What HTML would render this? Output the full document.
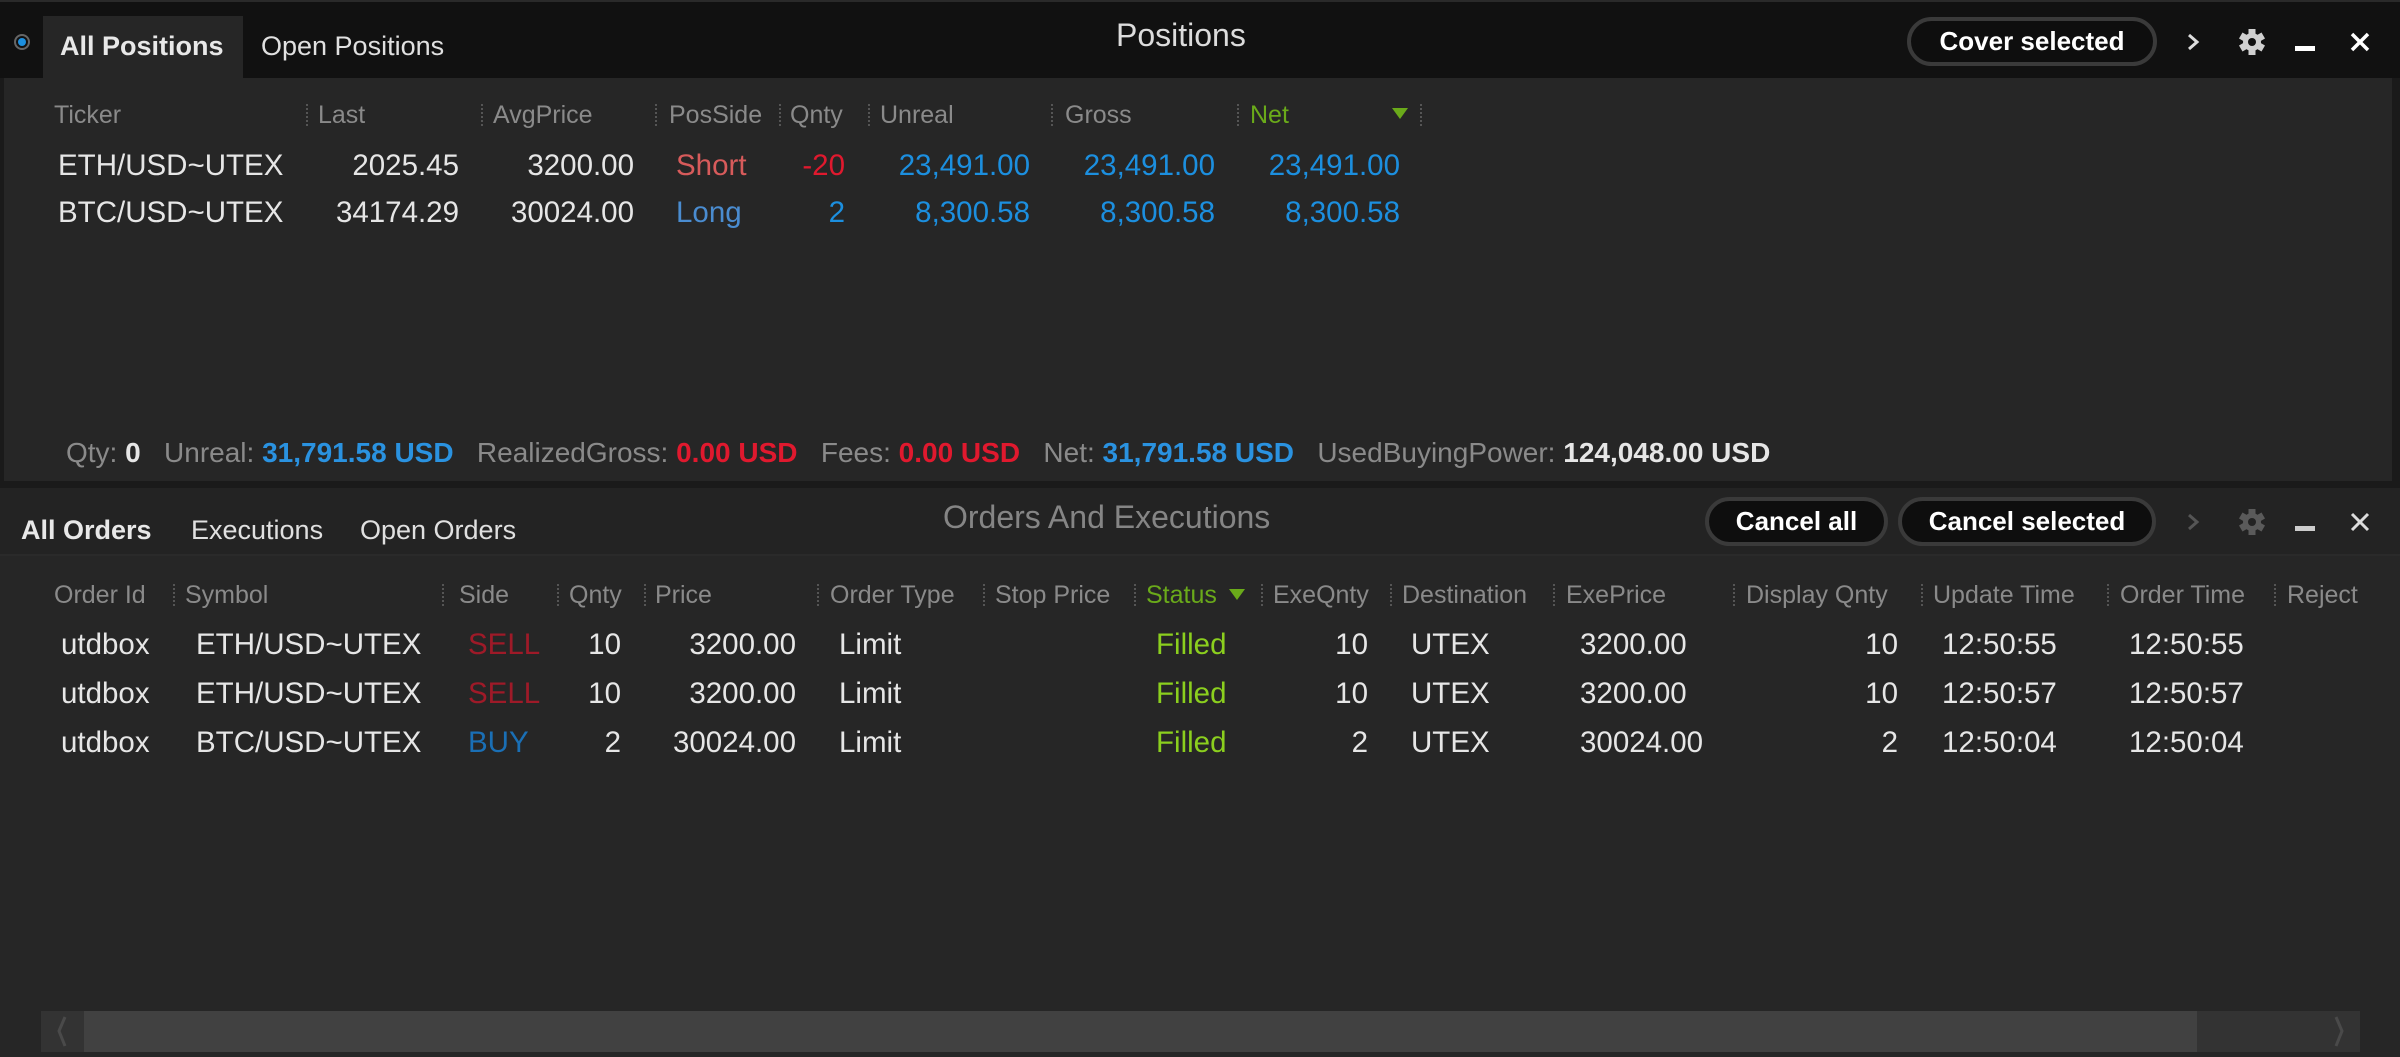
<!DOCTYPE html>
<html><head><meta charset="utf-8"><style>
*{margin:0;padding:0;box-sizing:border-box}
body{width:2400px;height:1057px;background:#1a1a1a;font-family:"Liberation Sans",sans-serif;position:relative;overflow:hidden;color:#e4e4e4}
.a{position:absolute;white-space:nowrap}
.r{text-align:right}
.h{font-size:25px;color:#8a8a8a}
.sep{position:absolute;width:0;height:22px;border-left:2px dotted #555}
.d{font-size:29.5px;color:#e6e6e6}
.btn{position:absolute;background:#0e0e0e;border:4px solid #3a3a3a;border-radius:26px;color:#fff;font-size:26px;font-weight:bold;text-align:center}
</style></head><body>
<div class="a" style="left:0;top:0;width:2400px;height:78px;background:#111;border-top:2px solid #2a2a2a"></div>
<div class="a" style="left:14px;top:34px;width:16px;height:16px;border-radius:50%;border:2px solid #666;background:#111"></div>
<div class="a" style="left:18px;top:38px;width:8px;height:8px;border-radius:50%;background:#1c8fdf"></div>
<div class="a" style="left:43px;top:16px;width:200px;height:62px;background:#262626"></div>
<div class="a" style="left:60px;top:31px;font-size:27px;font-weight:bold;color:#e8e8e8">All Positions</div>
<div class="a" style="left:261px;top:31px;font-size:27px;color:#e0e0e0">Open Positions</div>
<div class="a" style="left:1116px;top:17px;font-size:32px;color:#dcdcdc">Positions</div>
<div class="btn" style="left:1907px;top:17px;width:250px;height:49px;line-height:41px">Cover selected</div>
<svg class="a" style="left:2180px;top:28px" width="280" height="30" viewBox="0 0 280 30">
<path d="M9 7 L17 14 L9 21" stroke="#ddd" stroke-width="3" fill="none"/>
<g transform="translate(72,14)" fill="#d0d0d0"><circle r="9"/><rect x="-3.5" y="-13" width="7" height="26"/><rect x="-3.5" y="-13" width="7" height="26" transform="rotate(60)"/><rect x="-3.5" y="-13" width="7" height="26" transform="rotate(120)"/><circle r="4" fill="#111"/></g>
<rect x="115" y="18" width="20" height="5" fill="#fff"/>
<path d="M172 6 L188 22 M188 6 L172 22" stroke="#fff" stroke-width="3.5"/>
</svg>
<div class="a" style="left:4px;top:78px;width:2388px;height:403px;background:#262626"></div>
<div class="a h" style="left:54px;top:101px">Ticker</div>
<div class="sep" style="left:306px;top:104px"></div><div class="a h" style="left:318px;top:101px">Last</div>
<div class="sep" style="left:481px;top:104px"></div><div class="a h" style="left:493px;top:101px">AvgPrice</div>
<div class="sep" style="left:655px;top:104px"></div><div class="a h" style="left:669px;top:101px">PosSide</div>
<div class="sep" style="left:779px;top:104px"></div><div class="a h" style="left:790px;top:101px">Qnty</div>
<div class="sep" style="left:868px;top:104px"></div><div class="a h" style="left:880px;top:101px">Unreal</div>
<div class="sep" style="left:1051px;top:104px"></div><div class="a h" style="left:1065px;top:101px">Gross</div>
<div class="sep" style="left:1237px;top:104px"></div><div class="a h" style="left:1250px;top:101px;color:#6aaa1a">Net</div>
<div class="a" style="left:1392px;top:108px;width:0;height:0;border-left:8px solid transparent;border-right:8px solid transparent;border-top:11px solid #6aaa1a"></div>
<div class="sep" style="left:1420px;top:104px"></div>
<div class="a d" style="left:58px;top:149px">ETH/USD~UTEX</div>
<div class="a d r" style="right:1941px;top:149px">2025.45</div>
<div class="a d r" style="right:1766px;top:149px">3200.00</div>
<div class="a d" style="left:676px;top:149px;color:#d75b5b">Short</div>
<div class="a d r" style="right:1555px;top:149px;color:#e0192e">-20</div>
<div class="a d r" style="right:1370px;top:149px;color:#1c8fdf">23,491.00</div>
<div class="a d r" style="right:1185px;top:149px;color:#1c8fdf">23,491.00</div>
<div class="a d r" style="right:1000px;top:149px;color:#1c8fdf">23,491.00</div>
<div class="a d" style="left:58px;top:196px">BTC/USD~UTEX</div>
<div class="a d r" style="right:1941px;top:196px">34174.29</div>
<div class="a d r" style="right:1766px;top:196px">30024.00</div>
<div class="a d" style="left:676px;top:196px;color:#4a8cd0">Long</div>
<div class="a d r" style="right:1555px;top:196px;color:#1c8fdf">2</div>
<div class="a d r" style="right:1370px;top:196px;color:#1c8fdf">8,300.58</div>
<div class="a d r" style="right:1185px;top:196px;color:#1c8fdf">8,300.58</div>
<div class="a d r" style="right:1000px;top:196px;color:#1c8fdf">8,300.58</div>
<div class="a" style="left:66px;top:437px;font-size:28px;color:#8a8a8a">Qty: <b style="color:#e6e6e6">0</b>&nbsp;&nbsp; Unreal: <b style="color:#2a92e0">31,791.58 USD</b>&nbsp;&nbsp; RealizedGross: <b style="color:#e0192e">0.00 USD</b>&nbsp;&nbsp; Fees: <b style="color:#e0192e">0.00 USD</b>&nbsp;&nbsp; Net: <b style="color:#2a92e0">31,791.58 USD</b>&nbsp;&nbsp; UsedBuyingPower: <b style="color:#e6e6e6">124,048.00 USD</b></div>
<div class="a" style="left:0;top:488px;width:2400px;height:569px;background:#262626"></div>
<div class="a" style="left:0;top:488px;width:2400px;height:68px;background:#232323;border-bottom:2px solid #2a2a2a"></div>
<div class="a" style="left:21px;top:515px;font-size:27px;font-weight:bold;color:#e8e8e8">All Orders</div>
<div class="a" style="left:191px;top:515px;font-size:27px;color:#e0e0e0">Executions</div>
<div class="a" style="left:360px;top:515px;font-size:27px;color:#e0e0e0">Open Orders</div>
<div class="a" style="left:943px;top:499px;font-size:32px;color:#858585">Orders And Executions</div>
<div class="btn" style="left:1705px;top:497px;width:183px;height:49px;line-height:41px">Cancel all</div>
<div class="btn" style="left:1898px;top:497px;width:258px;height:49px;line-height:41px">Cancel selected</div>
<svg class="a" style="left:2180px;top:508px" width="280" height="30" viewBox="0 0 280 30">
<path d="M9 7 L17 14 L9 21" stroke="#555" stroke-width="3" fill="none"/>
<g transform="translate(72,14)" fill="#5a5a5a"><circle r="9"/><rect x="-3.5" y="-13" width="7" height="26"/><rect x="-3.5" y="-13" width="7" height="26" transform="rotate(60)"/><rect x="-3.5" y="-13" width="7" height="26" transform="rotate(120)"/><circle r="4" fill="#232323"/></g>
<rect x="115" y="18" width="20" height="5" fill="#ccc"/>
<path d="M172 6 L188 22 M188 6 L172 22" stroke="#ddd" stroke-width="3"/>
</svg>
<div class="a h" style="left:54px;top:581px">Order Id</div>
<div class="sep" style="left:173px;top:584px"></div><div class="a h" style="left:185px;top:581px">Symbol</div>
<div class="sep" style="left:442px;top:584px"></div><div class="a h" style="left:459px;top:581px">Side</div>
<div class="sep" style="left:557px;top:584px"></div><div class="a h" style="left:569px;top:581px">Qnty</div>
<div class="sep" style="left:644px;top:584px"></div><div class="a h" style="left:655px;top:581px">Price</div>
<div class="sep" style="left:817px;top:584px"></div><div class="a h" style="left:830px;top:581px">Order Type</div>
<div class="sep" style="left:983px;top:584px"></div><div class="a h" style="left:995px;top:581px">Stop Price</div>
<div class="sep" style="left:1134px;top:584px"></div><div class="a h" style="left:1146px;top:581px;color:#6aaa1a">Status</div>
<div class="a" style="left:1229px;top:589px;width:0;height:0;border-left:8px solid transparent;border-right:8px solid transparent;border-top:11px solid #6aaa1a"></div>
<div class="sep" style="left:1261px;top:584px"></div><div class="a h" style="left:1273px;top:581px">ExeQnty</div>
<div class="sep" style="left:1390px;top:584px"></div><div class="a h" style="left:1402px;top:581px">Destination</div>
<div class="sep" style="left:1553px;top:584px"></div><div class="a h" style="left:1566px;top:581px">ExePrice</div>
<div class="sep" style="left:1733px;top:584px"></div><div class="a h" style="left:1746px;top:581px">Display Qnty</div>
<div class="sep" style="left:1921px;top:584px"></div><div class="a h" style="left:1933px;top:581px">Update Time</div>
<div class="sep" style="left:2107px;top:584px"></div><div class="a h" style="left:2120px;top:581px">Order Time</div>
<div class="sep" style="left:2274px;top:584px"></div><div class="a h" style="left:2287px;top:581px;width:73px;overflow:hidden">Reject</div>
<div class="a d" style="left:61px;top:628px;width:92px;overflow:hidden">utdbox</div>
<div class="a d" style="left:196px;top:628px">ETH/USD~UTEX</div>
<div class="a d" style="left:468px;top:628px;color:#9e1a28">SELL</div>
<div class="a d r" style="right:1779px;top:628px">10</div>
<div class="a d r" style="right:1604px;top:628px">3200.00</div>
<div class="a d" style="left:839px;top:628px">Limit</div>
<div class="a d" style="left:1156px;top:628px;color:#8bcf1e">Filled</div>
<div class="a d r" style="right:1032px;top:628px">10</div>
<div class="a d" style="left:1411px;top:628px">UTEX</div>
<div class="a d" style="left:1580px;top:628px">3200.00</div>
<div class="a d r" style="right:502px;top:628px">10</div>
<div class="a d" style="left:1942px;top:628px">12:50:55</div>
<div class="a d" style="left:2129px;top:628px">12:50:55</div>
<div class="a d" style="left:61px;top:677px;width:92px;overflow:hidden">utdbox</div>
<div class="a d" style="left:196px;top:677px">ETH/USD~UTEX</div>
<div class="a d" style="left:468px;top:677px;color:#9e1a28">SELL</div>
<div class="a d r" style="right:1779px;top:677px">10</div>
<div class="a d r" style="right:1604px;top:677px">3200.00</div>
<div class="a d" style="left:839px;top:677px">Limit</div>
<div class="a d" style="left:1156px;top:677px;color:#8bcf1e">Filled</div>
<div class="a d r" style="right:1032px;top:677px">10</div>
<div class="a d" style="left:1411px;top:677px">UTEX</div>
<div class="a d" style="left:1580px;top:677px">3200.00</div>
<div class="a d r" style="right:502px;top:677px">10</div>
<div class="a d" style="left:1942px;top:677px">12:50:57</div>
<div class="a d" style="left:2129px;top:677px">12:50:57</div>
<div class="a d" style="left:61px;top:726px;width:92px;overflow:hidden">utdbox</div>
<div class="a d" style="left:196px;top:726px">BTC/USD~UTEX</div>
<div class="a d" style="left:468px;top:726px;color:#1a6fb5">BUY</div>
<div class="a d r" style="right:1779px;top:726px">2</div>
<div class="a d r" style="right:1604px;top:726px">30024.00</div>
<div class="a d" style="left:839px;top:726px">Limit</div>
<div class="a d" style="left:1156px;top:726px;color:#8bcf1e">Filled</div>
<div class="a d r" style="right:1032px;top:726px">2</div>
<div class="a d" style="left:1411px;top:726px">UTEX</div>
<div class="a d" style="left:1580px;top:726px">30024.00</div>
<div class="a d r" style="right:502px;top:726px">2</div>
<div class="a d" style="left:1942px;top:726px">12:50:04</div>
<div class="a d" style="left:2129px;top:726px">12:50:04</div>
<div class="a" style="left:41px;top:1011px;width:2319px;height:41px;background:#333"></div>
<div class="a" style="left:84px;top:1011px;width:2113px;height:41px;background:#414141"></div>
<svg class="a" style="left:41px;top:1011px" width="2319" height="41"><path d="M24 6 L18 20 L24 35" stroke="#4a4a4a" stroke-width="3" fill="none"/><path d="M2295 6 L2301 20 L2295 35" stroke="#4a4a4a" stroke-width="3" fill="none"/></svg>
</body></html>
